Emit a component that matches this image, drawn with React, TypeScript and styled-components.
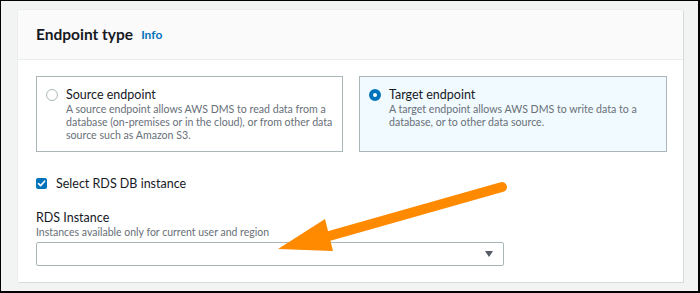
import styled, { createGlobalStyle } from 'styled-components'

const GlobalStyle = createGlobalStyle`
	html, body {
		margin: 0;
		padding: 0;
		background: #ffffff;
	}

	* {
		box-sizing: border-box;
	}
`

const Frame = styled.div`
	position: relative;
	width: 700px;
	height: 293px;
	background: #f2f3f3;
	border-style: solid;
	border-color: #000000;
	border-width: 1px 2px 2px 1px;
	padding: 9px 0 0 17px;
	font-family: Lato, "Noto Sans", sans-serif;
	color: #16191f;
	overflow: hidden;
`

const Card = styled.section`
	width: 665px;
	background: #ffffff;
	box-shadow: 1px 1px 0 #d5dbdb, 0 0 1px rgba(0, 28, 36, 0.15);
`

const Header = styled.header`
	height: 50px;
	display: flex;
	align-items: center;
	gap: 8px;
	padding: 0 18px 1px;
	background: #fafafa;
	border-bottom: 1px solid #eaeded;
`

const Title = styled.h2`
	margin: 0;
	font-size: 15.5px;
	font-weight: 700;
	line-height: 20px;
`

const InfoLink = styled.a`
	font-size: 12px;
	font-weight: 700;
	color: #0073bb;
	text-decoration: none;
	line-height: 20px;
	padding-top: 1px;
`

const Body = styled.div`
	padding: 16px 16px 16px 18px;
	display: flex;
	flex-direction: column;
`

const Tiles = styled.div`
	display: grid;
	grid-template-columns: 307px 308px;
	gap: 16px;
`

const Tile = styled.label<{ $selected?: boolean }>`
	display: flex;
	gap: 8px;
	padding: 10px 9px 9px 9px;
	border: 1px solid #aab7b8;
	background: ${props => props.$selected ? '#f1faff' : '#ffffff'};
	height: 76px;
`

const Radio = styled.span<{ $checked?: boolean }>`
	flex: none;
	width: 12px;
	height: 12px;
	margin-top: 2px;
	border-radius: 50%;
	background: #ffffff;
	border: ${props => props.$checked ? '4px solid #0073bb' : '1px solid #aab7b8'};
`

const TileText = styled.div`
	display: flex;
	flex-direction: column;
`

const TileLabel = styled.span`
	font-size: 12.5px;
	line-height: 16px;
	color: #16191f;
`

const TileDesc = styled.span`
	font-size: 10.6px;
	line-height: 13px;
	color: #687078;
`

const CheckRow = styled.label`
	display: flex;
	align-items: center;
	gap: 9px;
	margin-top: 23px;
	height: 16px;
	font-size: 12.5px;
	color: #16191f;
`

const CheckBox = styled.span`
	width: 11px;
	height: 11px;
	border-radius: 2px;
	background: #0073bb;
	display: flex;
	align-items: center;
	justify-content: center;
`

const FieldLabel = styled.div`
	margin-top: 19px;
	font-size: 12.5px;
	line-height: 16px;
	color: #16191f;
`

const FieldHint = styled.div`
	font-size: 10.5px;
	line-height: 13px;
	color: #687078;
`

const Select = styled.div`
	margin-top: 3px;
	width: 468px;
	height: 24px;
	border: 1px solid #aab7b8;
	border-radius: 2px;
	background: #ffffff;
	display: flex;
	align-items: center;
	justify-content: flex-end;
	padding-right: 10px;
`

const Caret = styled.span`
	width: 0;
	height: 0;
	border-left: 4.5px solid transparent;
	border-right: 4.5px solid transparent;
	border-top: 6px solid #545b64;
`

const Overlay = styled.svg`
	position: absolute;
	left: -1px;
	top: -1px;
	width: 700px;
	height: 293px;
	pointer-events: none;
`

const App = () => {
	return (
		<>
			<GlobalStyle />
			<Frame>
				<Card>
					<Header>
						<Title>Endpoint type</Title>
						<InfoLink>Info</InfoLink>
					</Header>
					<Body>
						<Tiles>
							<Tile>
								<Radio />
								<TileText>
									<TileLabel>Source endpoint</TileLabel>
									<TileDesc>
										A source endpoint allows AWS DMS to read data from a
										<br />
										database (on-premises or in the cloud), or from other data
										<br />
										source such as Amazon S3.
									</TileDesc>
								</TileText>
							</Tile>
							<Tile $selected>
								<Radio $checked />
								<TileText>
									<TileLabel>Target endpoint</TileLabel>
									<TileDesc>
										A target endpoint allows AWS DMS to write data to a
										<br />
										database, or to other data source.
									</TileDesc>
								</TileText>
							</Tile>
						</Tiles>
						<CheckRow>
							<CheckBox>
								<svg width="9" height="9" viewBox="0 0 9 9">
									<path d="M1.5 4.6 L3.6 6.6 L7.6 2.2" fill="none" stroke="#ffffff" strokeWidth="1.6" strokeLinecap="round" strokeLinejoin="round" />
								</svg>
							</CheckBox>
							Select RDS DB instance
						</CheckRow>
						<FieldLabel>RDS Instance</FieldLabel>
						<FieldHint>Instances available only for current user and region</FieldHint>
						<Select>
							<Caret />
						</Select>
					</Body>
				</Card>
				<Overlay viewBox="0 0 700 293">
					<line x1="502" y1="187" x2="322" y2="238" stroke="#ff8a00" strokeWidth="10" strokeLinecap="round" />
					<polygon points="278,249 325,219 333,251" fill="#ff8a00" />
				</Overlay>
			</Frame>
		</>
	)
}

export default App
